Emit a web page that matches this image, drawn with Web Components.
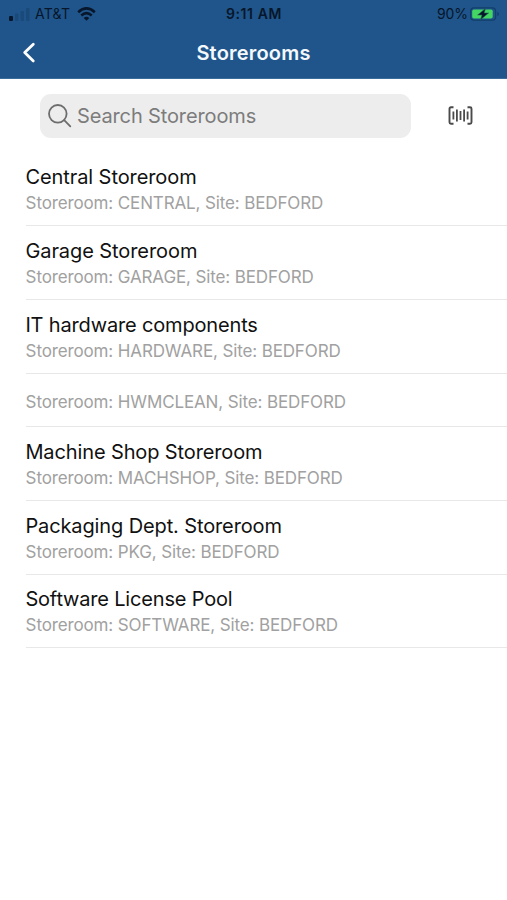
<!DOCTYPE html>
<html lang="en">
<head>
<meta charset="utf-8">
<title>Storerooms</title>
<style>
html,body{margin:0;height:100%;background:#fff}
body{font-family:Inter,"Liberation Sans",sans-serif;overflow:hidden}
</style>
</head>
<body>
<storeroom-page>
  <status-bar slot="header" carrier="AT&amp;T" time="9:11 AM" battery="90%"></status-bar>
  <nav-bar slot="header">Storerooms</nav-bar>
  <search-row>Search Storerooms</search-row>
  <store-item style="--ls:-.08px">Central Storeroom<span slot="sub">Storeroom: CENTRAL, Site: BEDFORD</span></store-item>
  <store-item style="--ls:-.08px">Garage Storeroom<span slot="sub">Storeroom: GARAGE, Site: BEDFORD</span></store-item>
  <store-item style="--ls:-.16px">IT hardware components<span slot="sub">Storeroom: HARDWARE, Site: BEDFORD</span></store-item>
  <store-item untitled><span slot="sub">Storeroom: HWMCLEAN, Site: BEDFORD</span></store-item>
  <store-item style="--ls:-.12px">Machine Shop Storeroom<span slot="sub">Storeroom: MACHSHOP, Site: BEDFORD</span></store-item>
  <store-item style="--ls:-.12px">Packaging Dept. Storeroom<span slot="sub">Storeroom: PKG, Site: BEDFORD</span></store-item>
  <store-item style="--ls:-.18px">Software License Pool<span slot="sub">Storeroom: SOFTWARE, Site: BEDFORD</span></store-item>
</storeroom-page>
<script>
const define = (name, html, setup) => {
  const t = document.createElement('template');
  t.innerHTML = html;
  customElements.define(name, class extends HTMLElement {
    connectedCallback() {
      if (this.shadowRoot) return;
      this.attachShadow({mode: 'open'}).append(t.content.cloneNode(true));
      if (setup) setup(this, this.shadowRoot);
    }
  });
};

define('storeroom-page', `<style>
:host{display:flex;flex-direction:column;width:507px}
header{background:#1f558a;height:79px;box-sizing:border-box;border-bottom:1px solid #3b6c9b}
</style><header><slot name="header"></slot></header><slot></slot>`);

define('status-bar', `<style>
:host{display:grid;grid-template-columns:1fr auto 1fr;align-items:center;height:27px;padding:0 8px 0 9px;font-size:14px;line-height:17px;color:#07162a}
.side{display:flex;align-items:center}
.end{justify-content:flex-end}
.carrier{font-size:14px;margin:0 6.500px 0 5px;letter-spacing:.25px}
.time{font-weight:600;font-size:14px;letter-spacing:.6px}
.bat{margin-right:2px;letter-spacing:-.1px}
svg{display:block}
</style>
<div class="side">
<svg width="21" height="14" viewBox="0 0 21 14"><rect y="9" width="4" height="5" rx="1.200" fill="#07162a"/><g fill="#1a4a7a"><rect x="6" y="6.500" width="3.500" height="7.500" rx="1"/><rect x="11.500" y="4" width="3.500" height="10" rx="1"/><rect x="17" y="1" width="3.500" height="13" rx="1"/></g></svg>
<span class="carrier"></span>
<svg width="19" height="14" viewBox="0 0 19 14" fill="none" stroke="#07162a" stroke-width="2.600"><path d="M1.200 5.200Q9.500-2.400 17.800 5.200M4.300 8.500Q9.500 3.900 14.700 8.500"/><path d="M6.700 10.900Q9.500 8.600 12.300 10.900L9.500 13.700Z" fill="#07162a" stroke="none"/></svg>
</div><span class="time"></span><div class="side end"><span class="bat"></span>
<svg width="29" height="14" viewBox="0 0 29 14"><rect x=".6" y=".9" width="25" height="12.200" rx="3.400" fill="none" stroke="#133e6b" stroke-width="1.200"/><path d="M27.300 5v4Q29 8.300 29 7T27.300 5Z" fill="#133e6b"/><rect x="2.200" y="2.400" width="20.500" height="9.200" rx="1.800" fill="#43d662"/><path d="M15.500 1.500L7.600 8H12L10.500 12.700L18.600 6H14.200Z" fill="#07162a" stroke="#1f6a55" stroke-width=".6"/></svg></div>`,
(h, r) => {
  r.querySelector('.carrier').textContent = h.getAttribute('carrier');
  r.querySelector('.time').textContent = h.getAttribute('time');
  r.querySelector('.bat').textContent = h.getAttribute('battery');
});

define('nav-bar', `<style>
:host{display:grid;grid-template-columns:60px 1fr 60px;align-items:center;height:51px;color:#f4f8fc;font-size:20px;font-weight:600;line-height:24px;letter-spacing:.2px;text-align:center}
svg{display:block;margin-left:22px}
</style><svg width="14" height="22" viewBox="0 0 14 22"><path d="M11.300 2.300L2.700 10.600L11.300 18.900" fill="none" stroke="#fff" stroke-width="2.800" stroke-linecap="round" stroke-linejoin="round"/></svg><span><slot></slot></span>`);

define('search-row', `<style>
:host{display:flex;align-items:center;height:73.800px;box-sizing:border-box;padding:0 34.500px 0 40px;justify-content:space-between}
.field{display:flex;align-items:center;gap:5px;width:371px;height:43.500px;border-radius:11px;background:#ededed;box-sizing:border-box;padding-left:8px;color:#7c7c7c;font-size:20px;line-height:24px;letter-spacing:-.13px}
svg{display:block}
</style><div class="field"><svg width="24" height="24" viewBox="0 0 24 24" fill="none" stroke="#6d6d6d" stroke-width="1.800" stroke-linecap="round"><circle cx="9.800" cy="9.800" r="8.800"/><path d="M16.200 16.200L22.300 22.300"/></svg><span><slot></slot></span></div>
<svg width="25" height="20" viewBox="0 0 25 20" fill="none" stroke="#4a4a4a"><path d="M5.500 1.200H3Q1.500 1.200 1.500 2.700V16.300Q1.500 17.800 3 17.800H5.500M19.500 1.200H22Q23.500 1.200 23.500 2.700V16.300Q23.500 17.800 22 17.800H19.500" stroke-width="1.900"/><path d="M5.400 5.500V13.500M8.900 3.500V15.500M12.500 5V14M16.100 3.500V15.500M19.600 5.500V13.500" stroke-width="1.800"/></svg>`);

define('store-item', `<style>
:host{display:flex;flex-direction:column;height:73.700px;box-sizing:border-box;margin-left:26px;padding-top:11.500px;border-bottom:1px solid #e8e8e8}
:host([untitled]){height:53.500px;padding-top:14.800px}
:host([untitled]) .t{display:none}
.t{font-size:20px;line-height:26px;color:#111;letter-spacing:var(--ls,0);margin-left:-.6px}
.s{font-size:17px;line-height:26px;color:#a1a1a1;letter-spacing:-.13px;margin-left:-.4px}
span{align-self:flex-start;white-space:nowrap}
</style><span class="t"><slot></slot></span><span class="s"><slot name="sub"></slot></span>`);
</script>
</body>
</html>
